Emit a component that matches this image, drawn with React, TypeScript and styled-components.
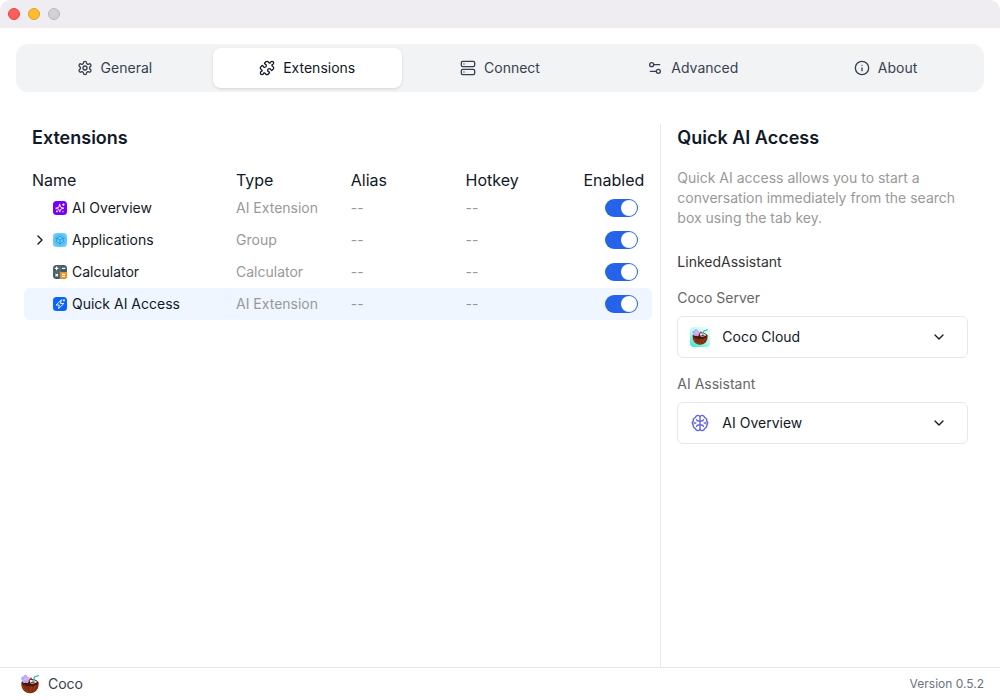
import React, { useState } from "react";
import styled, { createGlobalStyle } from "styled-components";
import { ChevronDown, ChevronRight, Info, Server, Settings2 } from "lucide-react";

const GlobalStyle = createGlobalStyle`
  *, *::before, *::after { box-sizing: border-box; }
  body {
    margin: 0;
    background: #fff;
    color: #111827;
    font-family: Inter, "Liberation Sans", sans-serif;
    font-size: 14px;
    line-height: 20px;
  }
  button, input, select { font: inherit; color: inherit; }
`;

const Window = styled.div`
  display: flex;
  flex-direction: column;
  min-height: 100vh;
`;

const TitleBar = styled.header`
  display: flex;
  align-items: center;
  gap: 8px;
  height: 28px;
  padding: 0 8px;
  background: #efedf2;
  border-radius: 10px 10px 0 0;
`;

const WindowButton = styled.button<{ $fill: string; $edge: string }>`
  width: 12px;
  height: 12px;
  padding: 0;
  border: 1px solid ${(p) => p.$edge};
  border-radius: 50%;
  background: ${(p) => p.$fill};
`;

const TabBar = styled.nav`
  display: flex;
  gap: 4px;
  margin: 16px 16px 0;
  padding: 4px;
  border-radius: 12px;
  background: #f2f3f5;
`;

const Tab = styled.button<{ $active: boolean }>`
  flex: 1 1 0;
  display: flex;
  align-items: center;
  justify-content: center;
  gap: 8px;
  height: 40px;
  padding: 0;
  border: 0;
  border-radius: 8px;
  color: ${(p) => (p.$active ? "#111827" : "#374151")};
  background: ${(p) => (p.$active ? "#fff" : "transparent")};
  box-shadow: ${(p) => (p.$active ? "0 1px 3px rgba(0, 0, 0, 0.12)" : "none")};
`;

const Content = styled.main`
  flex: 1;
  display: grid;
  grid-template-columns: 2fr 1fr;
  margin: 32px 16px 0;
`;

const ListPane = styled.section`
  min-width: 0;
  padding: 0 8px;
  border-right: 1px solid #e5e7eb;
`;

const DetailPane = styled.section`
  min-width: 0;
  padding: 0 16px;
`;

const Title = styled.h2<{ $inset?: boolean }>`
  margin: 0 0 16px;
  padding: 0 ${(p) => (p.$inset ? "8px" : "0")};
  font-size: 18px;
  line-height: 28px;
  font-weight: 600;
`;

const Table = styled.table`
  width: 100%;
  table-layout: fixed;
  border-collapse: separate;
  border-spacing: 0;
`;

const Col = styled.col<{ $width?: string }>`
  width: ${(p) => p.$width ?? "auto"};
`;

const HeadCell = styled.th<{ $first?: boolean; $last?: boolean }>`
  height: 24px;
  padding: 0 ${(p) => (p.$last ? "8px" : "0")} 0 ${(p) => (p.$first ? "8px" : "0")};
  font-size: 16px;
  line-height: 24px;
  font-weight: 400;
  text-align: ${(p) => (p.$last ? "right" : "left")};
  white-space: nowrap;
`;

const Row = styled.tr<{ $selected: boolean }>`
  --row-fill: ${(p) => (p.$selected ? "#eff6ff" : "transparent")};
`;

const Cell = styled.td`
  height: 32px;
  padding: 0;
  color: #999;
  background: var(--row-fill);
`;

const NameCell = styled(Cell)`
  padding-left: 8px;
  color: #111827;
  border-radius: 6px 0 0 6px;
`;

const ToggleCell = styled(Cell)`
  padding-right: 14px;
  border-radius: 0 6px 6px 0;
`;

const NameInner = styled.div`
  display: flex;
  align-items: center;
  gap: 4px;
`;

const Expander = styled.button`
  display: flex;
  width: 16px;
  height: 16px;
  padding: 0;
  border: 0;
  background: none;
`;

const ExpanderGap = styled.span`
  width: 16px;
`;

const Toggle = styled.input`
  appearance: none;
  display: block;
  width: 33px;
  height: 18px;
  margin: 0 0 0 auto;
  padding: 1px;
  border-radius: 9px;
  background: #d1d5db;

  &::before {
    content: "";
    display: block;
    width: 16px;
    height: 16px;
    border-radius: 50%;
    background: #fff;
  }
  &:checked { background: #2563eb; }
  &:checked::before { margin-left: auto; }
`;

const Description = styled.p`
  margin: 0 0 24px;
  color: #999;
`;

const SectionLabel = styled.h3`
  margin: 0 0 16px;
  font-size: 14px;
  line-height: 20px;
  font-weight: 400;
  color: #333;
`;

const Field = styled.div`
  margin-bottom: 16px;
`;

const FieldLabel = styled.label`
  display: block;
  margin-bottom: 8px;
  color: #666;
`;

const SelectBox = styled.div`
  display: grid;
  grid-template-columns: 20px 1fr 16px;
  align-items: center;
  height: 42px;
  padding: 0 20px 0 12px;
  border: 1px solid #e5e7eb;
  border-radius: 6px;

  > svg { grid-row: 1; justify-self: center; }
  > svg:last-child { grid-column: 3; pointer-events: none; }
`;

const Select = styled.select`
  grid-row: 1;
  grid-column: 2 / 4;
  appearance: none;
  width: 100%;
  height: 40px;
  padding: 0 20px 0 12px;
  border: 0;
  outline: 0;
  background: transparent;
`;

const Footer = styled.footer`
  display: flex;
  align-items: center;
  justify-content: space-between;
  height: 33px;
  padding: 0 16px 0 20px;
  border-top: 1px solid #e5e7eb;
`;

const Brand = styled.div`
  display: flex;
  align-items: center;
  gap: 8px;
  color: #374151;
`;

const Version = styled.span`
  font-size: 12px;
  line-height: 16px;
  color: #6b7280;
`;

const stroke = {
  fill: "none",
  stroke: "currentColor",
  strokeWidth: 2,
  strokeLinecap: "round" as const,
  strokeLinejoin: "round" as const,
};

const GearIcon = () => (
  <svg width="16" height="16" viewBox="0 0 24 24" {...stroke}>
    <path d="M12.22 2h-.44a2 2 0 0 0-2 2v.18a2 2 0 0 1-1 1.73l-.43.25a2 2 0 0 1-2 0l-.15-.08a2 2 0 0 0-2.73.73l-.22.38a2 2 0 0 0 .73 2.73l.15.1a2 2 0 0 1 1 1.72v.51a2 2 0 0 1-1 1.74l-.15.09a2 2 0 0 0-.73 2.73l.22.38a2 2 0 0 0 2.73.73l.15-.08a2 2 0 0 1 2 0l.43.25a2 2 0 0 1 1 1.73V20a2 2 0 0 0 2 2h.44a2 2 0 0 0 2-2v-.18a2 2 0 0 1 1-1.73l.43-.25a2 2 0 0 1 2 0l.15.08a2 2 0 0 0 2.73-.73l.22-.39a2 2 0 0 0-.73-2.73l-.15-.08a2 2 0 0 1-1-1.74v-.5a2 2 0 0 1 1-1.74l.15-.09a2 2 0 0 0 .73-2.73l-.22-.38a2 2 0 0 0-2.73-.73l-.15.08a2 2 0 0 1-2 0l-.43-.25a2 2 0 0 1-1-1.73V4a2 2 0 0 0-2-2z" />
    <circle cx="12" cy="12" r="3" />
  </svg>
);

const PuzzleIcon = () => (
  <svg width="16" height="16" viewBox="0 0 24 24" {...stroke}>
    <path d="M15.39 4.39a1 1 0 0 0 1.68-.474 2.5 2.5 0 1 1 3.014 3.015 1 1 0 0 0-.474 1.68l1.683 1.682a2.414 2.414 0 0 1 0 3.414L19.61 15.39a1 1 0 0 1-1.68-.474 2.5 2.5 0 1 0-3.014 3.015 1 1 0 0 1 .474 1.68l-1.683 1.682a2.414 2.414 0 0 1-3.414 0L8.61 19.61a1 1 0 0 0-1.68.474 2.5 2.5 0 1 1-3.014-3.015 1 1 0 0 0 .474-1.68l-1.683-1.682a2.414 2.414 0 0 1 0-3.414L4.39 8.61a1 1 0 0 1 1.68.474 2.5 2.5 0 1 0 3.014-3.015 1 1 0 0 1-.474-1.68l1.683-1.682a2.414 2.414 0 0 1 3.414 0z" />
  </svg>
);

const BrainIcon = () => (
  <svg width="20" height="20" viewBox="0 0 20 20" fill="none" stroke="#6366e8" strokeWidth="1.4" strokeLinecap="round" strokeLinejoin="round">
    <path d="M10 3.600A2.500 2.500 0 0 0 5.400 4.600 2.600 2.600 0 0 0 3.300 8 2.500 2.500 0 0 0 3.300 12 2.600 2.600 0 0 0 5.400 15.400 2.500 2.500 0 0 0 10 16.400 2.500 2.500 0 0 0 14.600 15.400 2.600 2.600 0 0 0 16.700 12 2.500 2.500 0 0 0 16.700 8 2.600 2.600 0 0 0 14.600 4.600 2.500 2.500 0 0 0 10 3.600z" />
    <path d="M10 3.600v12.800M10 8H8.200A1.800 1.800 0 0 1 6.600 6.600M10 12H8.200a1.800 1.800 0 0 0-1.600 1.400M10 8h1.800a1.800 1.800 0 0 0 1.600-1.400M10 12h1.800a1.800 1.800 0 0 1 1.600 1.400M3.800 10h2M14.200 10h2" />
  </svg>
);

const OverviewIcon = () => (
  <svg width="16" height="16" viewBox="0 0 16 16">
    <rect x="1" y="1" width="14" height="14" rx="3.5" fill="#7a00f5" />
    <g fill="none" stroke="#fff" strokeWidth="0.9" strokeLinecap="round" strokeLinejoin="round">
      <path d="M7.700 4.300 8.700 7.200 11.800 8.200 8.700 9.200 7.700 12.100 6.700 9.200 3.700 8.200 6.700 7.200z" />
      <path d="M11.400 3.800v1.800M10.500 4.700h1.800M4.900 10.900v.9M4.500 11.300h.9M11 11.300v.6" />
    </g>
  </svg>
);

const ApplicationsIcon = () => (
  <svg width="16" height="16" viewBox="0 0 16 16">
    <rect x="1" y="1" width="14" height="14" rx="3.5" fill="#6ecbfb" />
    <g fill="none" stroke="#1597de" strokeWidth="0.9" strokeLinejoin="round">
      <circle cx="8" cy="8" r="5.300" strokeOpacity="0.500" />
      <path d="M8 4.200 11.300 6.100v3.800L8 11.800 4.700 9.900V6.100zM4.700 6.100 8 8l3.300-1.900M8 8v3.800" />
    </g>
  </svg>
);

const CalculatorIcon = () => (
  <svg width="16" height="16" viewBox="0 0 16 16">
    <rect x="1" y="1" width="14" height="14" rx="3.5" fill="#455a64" />
    <path d="M8 8h7v3.500a3.500 3.500 0 0 1-3.500 3.500H8z" fill="#fb8c1a" />
    <path d="M1 7.700h7v.6H1zM7.700 1h.6v14h-.6z" fill="#78909c" />
    <path d="M4.600 2.600v3.600M2.800 4.400h3.600M9.900 4.400h3.400M3.500 9.900l2.400 2.400M5.900 9.900l-2.400 2.400M9.900 10.300h3.200M9.900 12.300h3.200" stroke="#fff" strokeWidth="1.200" />
  </svg>
);

const QuickIcon = () => (
  <svg width="16" height="16" viewBox="0 0 16 16">
    <rect x="1" y="1" width="14" height="14" rx="3.5" fill="#0b62ff" />
    <g fill="none" stroke="#fff" strokeWidth="0.900" strokeLinecap="round" strokeLinejoin="round">
      <path d="M9.300 4 4 9H7.200L6.600 12.500 11.900 7.400H8.700z" />
      <path d="M11.900 3.600v1.400M11.200 4.300h1.400" />
    </g>
  </svg>
);

const CocoLogo = ({ tile = false }: { tile?: boolean }) => (
  <svg width="20" height="20" viewBox="0 0 20 20">
    {tile && (
      <>
        <defs>
          <linearGradient id="tile" x1="0.8" y1="0" x2="0.2" y2="1">
            <stop offset="0" stopColor="#effffc" />
            <stop offset="0.6" stopColor="#a5f6ec" />
            <stop offset="1" stopColor="#3fe9da" />
          </linearGradient>
        </defs>
        <rect width="20" height="20" rx="4" fill="url(#tile)" />
      </>
    )}
    <g transform={tile ? "translate(1.500 1.300) scale(0.860)" : undefined}>
      <path d="M1.300 8.500C.8 14.800 4.500 19.200 10 19.200s9.200-4.400 8.700-10.700C17.500 6 14 5 10 5S2.500 6 1.300 8.500z" fill="#7c2d12" />
      <path d="M3 12.500c1 3 3.200 5 6 5.600M11.500 12.500l-1.300 5.500M15.500 11.500l-2 5" stroke="#a3441d" strokeWidth="0.9" fill="none" />
      <path d="M2 9.300c1.500 2.200 4.500 3 8 3s6.500-.8 8-3C17.500 6.500 14 5 10 5S2.500 6.500 2 9.300z" fill="#45170d" />
      <path d="M9.500 6.300c3-.9 6.300-.3 7.600 1.700-1.800 1.400-4 1.900-6.400 1.600z" fill="#f6ebe6" />
      <path d="M10.500 8.400c1.800-1 3.700-1 5.200-.3-1.300.9-3.200 1.200-5.200.3z" fill="#6b3023" />
      <path d="M13 6.800 14.500 3l4-1.300" fill="none" stroke="#35b7cd" strokeWidth="1.300" strokeLinecap="round" />
      <circle cx="11" cy="4.700" r="1.100" fill="#c93a55" />
      <g fill="#c9a8f2">
        <circle cx="5.400" cy="2.800" r="2" />
        <circle cx="3.100" cy="4.600" r="2" fill="#93b8f6" />
        <circle cx="7.700" cy="4.800" r="2" fill="#d6a8ef" />
        <circle cx="4.200" cy="7" r="1.900" />
        <circle cx="6.800" cy="7.200" r="1.900" />
      </g>
      <circle cx="5.500" cy="5" r="1.100" fill="#ecc1ef" />
    </g>
  </svg>
);

const tabs = [
  { label: "General", icon: <GearIcon /> },
  { label: "Extensions", icon: <PuzzleIcon /> },
  { label: "Connect", icon: <Server size={16} /> },
  { label: "Advanced", icon: <Settings2 size={16} /> },
  { label: "About", icon: <Info size={16} /> },
];

const extensions = [
  { name: "AI Overview", type: "AI Extension", icon: <OverviewIcon /> },
  { name: "Applications", type: "Group", icon: <ApplicationsIcon />, group: true },
  { name: "Calculator", type: "Calculator", icon: <CalculatorIcon /> },
  { name: "Quick AI Access", type: "AI Extension", icon: <QuickIcon /> },
];

export default function App() {
  const [tab, setTab] = useState("Extensions");
  const [selected, setSelected] = useState("Quick AI Access");

  return (
    <Window>
      <GlobalStyle />
      <TitleBar>
        <WindowButton $fill="#ff5f57" $edge="#e2463f" aria-label="Close" />
        <WindowButton $fill="#febc2e" $edge="#e0a023" aria-label="Minimize" />
        <WindowButton $fill="#d3d1d6" $edge="#b9b7bc" aria-label="Zoom" />
      </TitleBar>

      <TabBar>
        {tabs.map((t) => (
          <Tab key={t.label} $active={t.label === tab} onClick={() => setTab(t.label)}>
            {t.icon}
            {t.label}
          </Tab>
        ))}
      </TabBar>

      <Content>
        <ListPane>
          <Title $inset>Extensions</Title>
          <Table>
            <colgroup>
              <Col $width="212px" />
              <Col />
              <Col />
              <Col />
              <Col $width="72px" />
            </colgroup>
            <thead>
              <tr>
                <HeadCell $first>Name</HeadCell>
                <HeadCell>Type</HeadCell>
                <HeadCell>Alias</HeadCell>
                <HeadCell>Hotkey</HeadCell>
                <HeadCell $last>Enabled</HeadCell>
              </tr>
            </thead>
            <tbody>
              {extensions.map((e) => (
                <Row key={e.name} $selected={e.name === selected} onClick={() => setSelected(e.name)}>
                  <NameCell>
                    <NameInner>
                      {e.group ? (
                        <Expander aria-label={`Expand ${e.name}`}>
                          <ChevronRight size={16} />
                        </Expander>
                      ) : (
                        <ExpanderGap />
                      )}
                      {e.icon}
                      {e.name}
                    </NameInner>
                  </NameCell>
                  <Cell>{e.type}</Cell>
                  <Cell>--</Cell>
                  <Cell>--</Cell>
                  <ToggleCell>
                    <Toggle type="checkbox" defaultChecked aria-label={`Enable ${e.name}`} />
                  </ToggleCell>
                </Row>
              ))}
            </tbody>
          </Table>
        </ListPane>

        <DetailPane>
          <Title>Quick AI Access</Title>
          <Description>
            Quick AI access allows you to start a conversation immediately from the search box using the tab key.
          </Description>
          <SectionLabel>LinkedAssistant</SectionLabel>
          <Field>
            <FieldLabel htmlFor="server">Coco Server</FieldLabel>
            <SelectBox>
              <CocoLogo tile />
              <Select id="server">
                <option>Coco Cloud</option>
              </Select>
              <ChevronDown size={16} />
            </SelectBox>
          </Field>
          <Field>
            <FieldLabel htmlFor="assistant">AI Assistant</FieldLabel>
            <SelectBox>
              <BrainIcon />
              <Select id="assistant">
                <option>AI Overview</option>
              </Select>
              <ChevronDown size={16} />
            </SelectBox>
          </Field>
        </DetailPane>
      </Content>

      <Footer>
        <Brand>
          <CocoLogo />
          Coco
        </Brand>
        <Version>Version 0.5.2</Version>
      </Footer>
    </Window>
  );
}
